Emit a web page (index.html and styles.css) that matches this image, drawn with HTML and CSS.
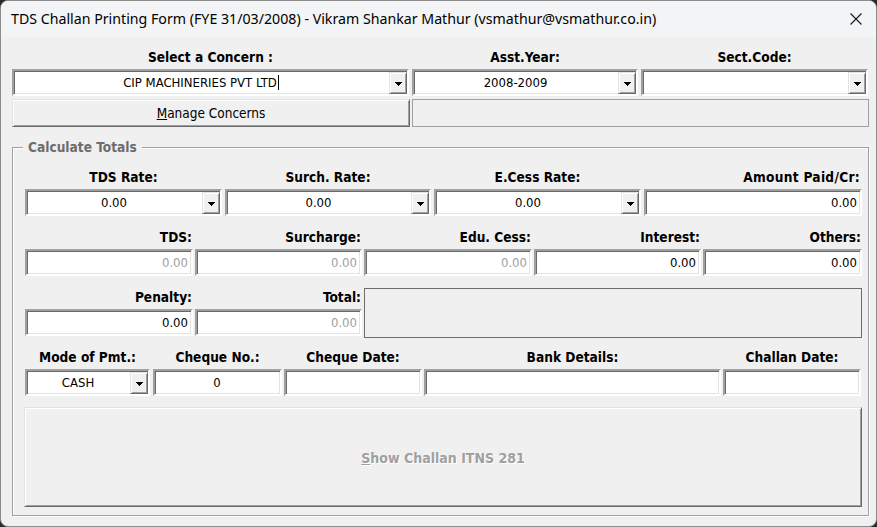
FILE: index.html
```html
<!DOCTYPE html>
<html>
<head>
<meta charset="utf-8">
<title>TDS Challan Printing Form</title>
<link rel="stylesheet" href="styles.css">
</head>
<body>
<div class="window">
  <div class="titlebar">
    <span class="title">TDS Challan Printing Form (FYE 31/03/2008) - Vikram Shankar Mathur (vsmathur@vsmathur.co.in)</span>
    <svg class="close" width="12" height="12" viewBox="0 0 12 12"><path d="M0.5 0.5L11.5 11.5M11.5 0.5L0.5 11.5" stroke="#1a1a1a" stroke-width="1.1" fill="none"/></svg>
  </div>
  <div class="client">
    <div class="concern-row">
      <div class="cell">
        <div class="lbl center">Select a Concern :</div>
        <div class="field combo"><span class="val center">CIP MACHINERIES PVT LTD<span class="caret"></span></span><span class="dd"><svg width="7" height="4" viewBox="0 0 7 4"><path d="M0 0h7v1h-1v1h-1v1h-1v1h-1v-1h-1v-1h-1v-1h-1z"/></svg></span></div>
      </div>
      <div class="cell">
        <div class="lbl center">Asst.Year:</div>
        <div class="field combo"><span class="val center">2008-2009</span><span class="dd"><svg width="7" height="4" viewBox="0 0 7 4"><path d="M0 0h7v1h-1v1h-1v1h-1v1h-1v-1h-1v-1h-1v-1h-1z"/></svg></span></div>
      </div>
      <div class="cell">
        <div class="lbl center">Sect.Code:</div>
        <div class="field combo"><span class="val center"></span><span class="dd"><svg width="7" height="4" viewBox="0 0 7 4"><path d="M0 0h7v1h-1v1h-1v1h-1v1h-1v-1h-1v-1h-1v-1h-1z"/></svg></span></div>
      </div>
    </div>
    <div class="manage-row">
      <div class="btn manage"><u>M</u>anage Concerns</div>
      <div class="info-panel"></div>
    </div>
    <fieldset class="group">
      <legend>Calculate Totals</legend>
      <div class="row r-rates">
        <div class="cell">
          <div class="lbl center">TDS Rate:</div>
          <div class="field combo"><span class="val center">0.00</span><span class="dd"><svg width="7" height="4" viewBox="0 0 7 4"><path d="M0 0h7v1h-1v1h-1v1h-1v1h-1v-1h-1v-1h-1v-1h-1z"/></svg></span></div>
        </div>
        <div class="cell">
          <div class="lbl center">Surch. Rate:</div>
          <div class="field combo"><span class="val center">0.00</span><span class="dd"><svg width="7" height="4" viewBox="0 0 7 4"><path d="M0 0h7v1h-1v1h-1v1h-1v1h-1v-1h-1v-1h-1v-1h-1z"/></svg></span></div>
        </div>
        <div class="cell">
          <div class="lbl center">E.Cess Rate:</div>
          <div class="field combo"><span class="val center">0.00</span><span class="dd"><svg width="7" height="4" viewBox="0 0 7 4"><path d="M0 0h7v1h-1v1h-1v1h-1v1h-1v-1h-1v-1h-1v-1h-1z"/></svg></span></div>
        </div>
        <div class="cell">
          <div class="lbl right wide">Amount Paid/Cr:</div>
          <div class="field"><span class="val right">0.00</span></div>
        </div>
      </div>
      <div class="row r-amounts">
        <div class="cell">
          <div class="lbl right">TDS:</div>
          <div class="field disabled"><span class="val right">0.00</span></div>
        </div>
        <div class="cell">
          <div class="lbl right">Surcharge:</div>
          <div class="field disabled"><span class="val right">0.00</span></div>
        </div>
        <div class="cell">
          <div class="lbl right">Edu. Cess:</div>
          <div class="field disabled"><span class="val right">0.00</span></div>
        </div>
        <div class="cell">
          <div class="lbl right">Interest:</div>
          <div class="field"><span class="val right">0.00</span></div>
        </div>
        <div class="cell">
          <div class="lbl right">Others:</div>
          <div class="field"><span class="val right">0.00</span></div>
        </div>
      </div>
      <div class="row r-totals">
        <div class="cell">
          <div class="lbl right">Penalty:</div>
          <div class="field"><span class="val right">0.00</span></div>
        </div>
        <div class="cell">
          <div class="lbl right">Total:</div>
          <div class="field disabled"><span class="val right">0.00</span></div>
        </div>
        <div class="total-panel"></div>
      </div>
      <div class="row r-payment">
        <div class="cell">
          <div class="lbl center">Mode of Pmt.:</div>
          <div class="field combo"><span class="val center">CASH</span><span class="dd"><svg width="7" height="4" viewBox="0 0 7 4"><path d="M0 0h7v1h-1v1h-1v1h-1v1h-1v-1h-1v-1h-1v-1h-1z"/></svg></span></div>
        </div>
        <div class="cell">
          <div class="lbl center">Cheque No.:</div>
          <div class="field"><span class="val center">0</span></div>
        </div>
        <div class="cell">
          <div class="lbl center">Cheque Date:</div>
          <div class="field"><span class="val center"></span></div>
        </div>
        <div class="cell">
          <div class="lbl center">Bank Details:</div>
          <div class="field"><span class="val center"></span></div>
        </div>
        <div class="cell">
          <div class="lbl center">Challan Date:</div>
          <div class="field"><span class="val center"></span></div>
        </div>
      </div>
      <div class="btn show"><span class="show-text"><u>S</u>how Challan ITNS 281</span></div>
    </fieldset>
  </div>
</div>
</body>
</html>
```
FILE: styles.css
```css
* { box-sizing: border-box; }
html, body { margin: 0; padding: 0; }
body {
  background: #2a2a2a;
  font-family: "DejaVu Sans Condensed", "DejaVu Sans", sans-serif;
  color: #000;
}
.window {
  width: 877px;
  height: 527px;
  border: 1px solid #8c8c8c;
  border-radius: 8px;
  background: #f0f0f0;
  overflow: hidden;
}
.titlebar {
  height: 36px;
  background: #f3f4f6;
  display: flex;
  align-items: center;
  justify-content: space-between;
  padding: 0 14px 0 10px;
}
.title {
  font-family: "Noto Sans", sans-serif;
  font-size: 14.2px;
  color: #000;
  padding-bottom: 1px;
}
.close { display: block; }
.client {
  padding: 12px 0 0 11px;
}
.cell { display: flex; flex-direction: column; }
.lbl {
  height: 16px;
  line-height: 16px;
  font-weight: bold;
  font-size: 13.6px;
  white-space: nowrap;
  margin-bottom: 4px;
}
.lbl.center { text-align: center; }
.lbl.right { text-align: right; padding-right: 1px; }
.lbl.wide { letter-spacing: 0.3px; padding-right: 2px; }

.field {
  height: 27px;
  background: #fff;
  border: 2px solid;
  border-color: #a0a0a0 #fff #fff #a0a0a0;
  box-shadow: inset 1px 1px 0 #696969, inset -1px -1px 0 #e3e3e3;
  display: flex;
  align-items: stretch;
  font-size: 13px;
}
.field .val {
  flex: 1;
  display: flex;
  align-items: center;
  white-space: nowrap;
  padding: 0 3px 0 2px;
}
.field .val.center { justify-content: center; }
.field .val.right { justify-content: flex-end; }
.field.disabled .val { color: #a0a0a0; }
.caret {
  display: inline-block;
  width: 1px;
  height: 15px;
  background: #000;
  margin-left: 1px;
}
.dd {
  width: 18px;
  margin: 1px 0 0 0;
  background: #f0f0f0;
  border: 1px solid;
  border-color: #e3e3e3 #696969 #696969 #e3e3e3;
  box-shadow: inset 1px 1px 0 #fff, inset -1px -1px 0 #a0a0a0;
  display: flex;
  align-items: center;
  justify-content: center;
}
.dd svg { display: block; fill: #000; margin-top: 1px; }

.concern-row {
  display: grid;
  grid-template-columns: 397px 226px 227px;
  column-gap: 3px;
}
.manage-row {
  display: flex;
  gap: 2px;
  margin-top: 3px;
  height: 28px;
}
.btn {
  background: #f0f0f0;
  border: 1px solid;
  border-color: #e3e3e3 #696969 #696969 #e3e3e3;
  box-shadow: inset 1px 1px 0 #fff, inset -1px -1px 0 #a0a0a0;
  display: flex;
  align-items: center;
  justify-content: center;
  font-size: 13.5px;
}
.manage { width: 398px; }
.info-panel {
  width: 457px;
  border: 1px solid #a0a0a0;
  background: #f0f0f0;
}

.group {
  margin: 12px 0 0 0;
  width: 857px;
  border: 1px solid #a0a0a0;
  box-shadow: 1px 1px 0 #fff, inset 1px 1px 0 #fff;
  padding: 14px 5px 8px 12px;
  min-width: 0;
}
.group legend {
  margin-left: -2px;
  padding: 0 5px;
  font-weight: bold;
  font-size: 13.6px;
  line-height: 16px;
  height: 16px;
  color: #6d6d6d;
  background: #f0f0f0;
}
.row { display: grid; }
.row + .row { margin-top: 13px; }
.r-rates { grid-template-columns: 197px 206px 207px 218px; column-gap: 3px; }
.r-amounts { grid-template-columns: 168px 167px 168px 167px 159px; column-gap: 2px; }
.r-totals { grid-template-columns: 168px 167px 498px; column-gap: 2px; align-items: start; }
.r-payment { grid-template-columns: 126px 129px 138px 297px 138px; column-gap: 2px; }
.r-payment .cell:first-child { margin-right: 1px; }
.total-panel {
  height: 50px;
  margin-top: -1px;
  margin-bottom: -3px;
  border: 1px solid #6d6d6d;
  background: #f0f0f0;
}
.show {
  margin: 11px 0 0 -1px;
  width: 838px;
  height: 100px;
  font-weight: bold;
  font-size: 14px;
}
.show-text {
  color: #a0a0a0;
  text-shadow: 1px 1px 0 #fff;
  padding-top: 2px;
}
.show-text u { text-decoration-color: #a0a0a0; }
```
